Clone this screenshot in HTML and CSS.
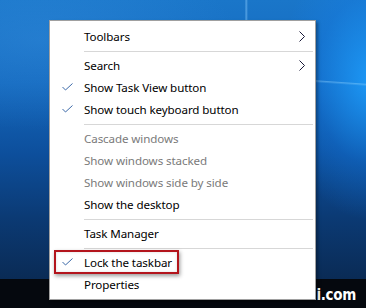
FILE: index.html
```html
<!DOCTYPE html>
<html>
<head>
<meta charset="utf-8">
<link rel="stylesheet" href="styles.css">
</head>
<body>
<div class="desktop">
  <div class="wallpaper"></div>
  <div class="taskbar"><span class="wm">i.com</span></div>
  <div class="menu">
    <div class="item"><span class="chk"></span><span class="lbl">Toolbars</span><span class="sub"><svg width="6" height="11" viewBox="0 0 6 11"><polyline points="0.5,0.5 5.5,5.5 0.5,10.5" fill="none" stroke="#1b1b3a" stroke-width="1"/></svg></span></div>
    <div class="sep"></div>
    <div class="item"><span class="chk"></span><span class="lbl">Search</span><span class="sub"><svg width="6" height="11" viewBox="0 0 6 11"><polyline points="0.5,0.5 5.5,5.5 0.5,10.5" fill="none" stroke="#1b1b3a" stroke-width="1"/></svg></span></div>
    <div class="item"><span class="chk"><svg width="11" height="8" viewBox="0 0 11 8"><polyline points="0.5,4 3.5,7 10.5,0.5" fill="none" stroke="#3d6aa8" stroke-width="1"/></svg></span><span class="lbl">Show Task View button</span><span class="sub"></span></div>
    <div class="item"><span class="chk"><svg width="11" height="8" viewBox="0 0 11 8"><polyline points="0.5,4 3.5,7 10.5,0.5" fill="none" stroke="#3d6aa8" stroke-width="1"/></svg></span><span class="lbl">Show touch keyboard button</span><span class="sub"></span></div>
    <div class="sep"></div>
    <div class="item dis"><span class="chk"></span><span class="lbl">Cascade windows</span><span class="sub"></span></div>
    <div class="item dis"><span class="chk"></span><span class="lbl">Show windows stacked</span><span class="sub"></span></div>
    <div class="item dis"><span class="chk"></span><span class="lbl">Show windows side by side</span><span class="sub"></span></div>
    <div class="item"><span class="chk"></span><span class="lbl">Show the desktop</span><span class="sub"></span></div>
    <div class="sep"></div>
    <div class="item"><span class="chk"></span><span class="lbl">Task Manager</span><span class="sub"></span></div>
    <div class="sep"></div>
    <div class="item marked"><span class="chk"><svg width="11" height="8" viewBox="0 0 11 8"><polyline points="0.5,4 3.5,7 10.5,0.5" fill="none" stroke="#3d6aa8" stroke-width="1"/></svg></span><span class="lbl">Lock the taskbar</span><span class="sub"></span><span class="callout"></span></div>
    <div class="item"><span class="chk"></span><span class="lbl">Properties</span><span class="sub"></span></div>
  </div>
</div>
</body>
</html>
```

FILE: styles.css
```css
html, body {
  margin: 0;
  padding: 0;
}
body {
  width: 366px;
  height: 308px;
  overflow: hidden;
  font-family: "Noto Sans", "Open Sans", sans-serif;
}
.desktop {
  position: relative;
  width: 366px;
  height: 308px;
  display: flex;
  flex-direction: column;
}
.wallpaper {
  flex: 1;
  background:
    linear-gradient(90deg, transparent 245px, rgba(140,205,255,.55) 246px, transparent 248px) top / 100% 22px no-repeat,
    linear-gradient(174deg, transparent 60px, rgba(150,215,255,.55) 61px, transparent 63px) 300px 40px / 80px 40px no-repeat,
    linear-gradient(-176deg, transparent 84px, rgba(150,215,255,.4) 85px, transparent 87px) 300px 0 / 80px 100px no-repeat,
    radial-gradient(ellipse 90px 140px at 370px 80px, rgba(30,160,255,.85), rgba(20,130,240,.3) 60%, transparent 100%),
    radial-gradient(ellipse 200px 90px at 40px 40px, rgba(60,150,230,.35), transparent 100%),
    linear-gradient(180deg, #1a76c9 0%, #1468bd 30%, #0d4f9c 55%, #0b3a74 78%, #0a2b55 100%);
}
.taskbar {
  height: 29px;
  background: #05080e;
  display: flex;
  justify-content: flex-end;
  align-items: center;
  padding-right: 10px;
}
.wm {
  font-family: "DejaVu Sans Condensed", "DejaVu Sans", sans-serif;
  font-weight: bold;
  font-size: 15px;
  color: #ffffff;
  letter-spacing: -0.3px;
  margin-top: 2px;
}
.menu {
  position: absolute;
  left: 49px;
  top: 20px;
  width: 267px;
  box-sizing: border-box;
  background: #ffffff;
  border: 1px solid #a0a0a0;
  box-shadow: 2px 2px 3px rgba(0,0,0,.35);
  padding: 4px 0;
  font-size: 11.6px;
  letter-spacing: -0.1px;
  color: #000;
}
.item {
  position: relative;
  display: flex;
  align-items: center;
  height: 22px;
  line-height: 22px;
}
.lbl {
  flex: 1;
  white-space: nowrap;
  padding-top: 1px;
}
.chk {
  width: 34px;
  flex: none;
  display: flex;
  align-items: center;
  padding-left: 12px;
  box-sizing: border-box;
}
.chk svg { display: block; }
.sub {
  width: 16px;
  flex: none;
  display: flex;
  align-items: center;
}
.sub svg { display: block; }
.dis { color: #7a7a7a; }
.sep {
  height: 1px;
  background: #d7d7d7;
  margin: 4px 2px 2px 34px;
}
.callout {
  position: absolute;
  left: 4px;
  top: -1px;
  width: 125px;
  height: 24px;
  box-sizing: border-box;
  border: 2px solid #b3141c;
  box-shadow: 1px 2px 4px rgba(0,0,0,.4), inset 0 0 3px rgba(0,0,0,.15);
}
```
